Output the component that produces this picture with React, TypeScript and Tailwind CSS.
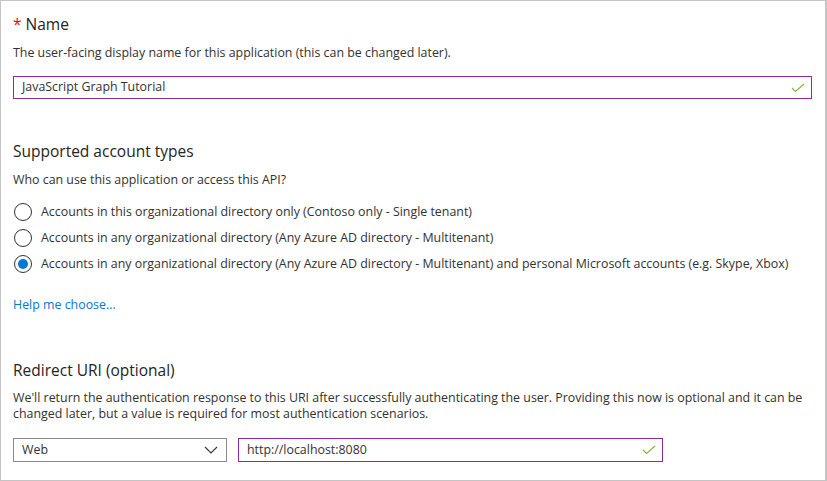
import React from 'react'

const Check = () => (
  <svg width="14" height="10" viewBox="0 0 14 10" className="shrink-0">
    <path d="M1 5 L4.5 8.5 L13 1" fill="none" stroke="#7fba3a" strokeWidth="1.2" />
  </svg>
)

const Chevron = () => (
  <svg width="14" height="8" viewBox="0 0 14 8" className="shrink-0">
    <path d="M1 1 L7 7 L13 1" fill="none" stroke="#333" strokeWidth="1.1" />
  </svg>
)

const Radio = ({ checked, label }: { checked?: boolean; label: string }) => (
  <div className="flex items-center h-[26px]">
    <div className="w-[18px] h-[18px] rounded-full border border-[#323130] flex items-center justify-center bg-white shrink-0 ml-[13px]">
      {checked && <div className="w-[10px] h-[10px] rounded-full bg-[#0078d4]" />}
    </div>
    <span className="ml-[9px] text-[12.4px] whitespace-nowrap text-[#323130]">{label}</span>
  </div>
)

const App = () => {
  const accountTypes = [
    { label: 'Accounts in this organizational directory only (Contoso only - Single tenant)' },
    { label: 'Accounts in any organizational directory (Any Azure AD directory - Multitenant)' },
    {
      label:
        'Accounts in any organizational directory (Any Azure AD directory - Multitenant) and personal Microsoft accounts (e.g. Skype, Xbox)',
      checked: true,
    },
  ]

  return (
    <div
      className="w-[827px] h-[481px] bg-white border border-[#c4c4c4] border-r-2 overflow-hidden text-[#323130]"
      style={{ fontFamily: '"Segoe UI", "Open Sans", sans-serif' }}
    >
      <div className="px-[12px] pt-[10px]">
        <h2 className="text-[15.5px] leading-[26px] font-normal text-[#252423]">
          <span className="text-[#e00b1c] mr-[4px]">*</span>Name
        </h2>
        <p className="text-[12.4px] leading-[18px] mt-[7px]">
          The user-facing display name for this application (this can be changed later).
        </p>
        <div className="mt-[14px] w-[799px] h-[23px] border border-[#8c2ca8] flex items-center justify-between pl-[8px] pr-[6px]">
          <span className="text-[12.4px]">JavaScript Graph Tutorial</span>
          <Check />
        </div>
      </div>

      <div className="pt-[39px]">
        <h2 className="px-[12px] text-[15.5px] leading-[26px] font-normal text-[#252423]">Supported account types</h2>
        <p className="px-[12px] text-[12.4px] leading-[18px] mt-[7px]">Who can use this application or access this API?</p>
        <div className="mt-[10px] flex flex-col">
          {accountTypes.map((a) => (
            <Radio key={a.label} label={a.label} checked={a.checked} />
          ))}
        </div>
        <a className="block px-[12px] mt-[19px] text-[12.4px] leading-[18px] text-[#0078d4]">Help me choose...</a>
      </div>

      <div className="px-[12px] pt-[43px]">
        <h2 className="text-[15.5px] leading-[26px] font-normal text-[#252423]">Redirect URI (optional)</h2>
        <p className="text-[12.4px] leading-[16px] mt-[7px]">
          We'll return the authentication response to this URI after successfully authenticating the user. Providing this
          now is optional and it can be changed later, but a value is required for most authentication scenarios.
        </p>
        <div className="mt-[16px] flex gap-[11px]">
          <div className="w-[214px] h-[24px] border border-[#8a8886] flex items-center justify-between pl-[8px] pr-[8px]">
            <span className="text-[12.4px]">Web</span>
            <Chevron />
          </div>
          <div className="w-[425px] h-[24px] border border-[#8c2ca8] flex items-center justify-between pl-[8px] pr-[6px]">
            <span className="text-[12.4px]">http://localhost:8080</span>
            <Check />
          </div>
        </div>
      </div>
    </div>
  )
}

export default App
